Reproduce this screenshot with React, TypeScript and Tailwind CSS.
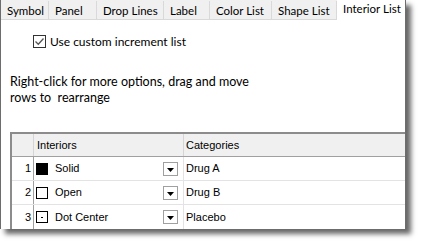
import type { ReactNode } from "react";

const TABS: { label: string; w: string; active?: boolean }[] = [
  { label: "Symbol", w: "w-[48px]" },
  { label: "Panel", w: "w-[48px]" },
  { label: "Drop Lines", w: "w-[67px]" },
  { label: "Label", w: "w-[46px]" },
  { label: "Color List", w: "w-[62px]" },
  { label: "Shape List", w: "w-[65px]" },
  { label: "Interior List", w: "flex-1", active: true },
];

type Kind = "solid" | "open" | "dot";

const ROWS: { n: number; kind: Kind; label: string; cat: string }[] = [
  { n: 1, kind: "solid", label: "Solid", cat: "Drug A" },
  { n: 2, kind: "open", label: "Open", cat: "Drug B" },
  { n: 3, kind: "dot", label: "Dot Center", cat: "Placebo" },
];

const ui = "font-['Lato','Noto_Sans',sans-serif]";
const grid = "font-['Liberation_Sans',Arial,sans-serif] text-[11px]";

function Swatch({ kind }: { kind: Kind }) {
  if (kind === "solid") return <span className="block w-[12px] h-[12px] bg-black" />;
  return (
    <span className="flex items-center justify-center w-[12px] h-[12px] border border-black bg-white">
      {kind === "dot" && <span className="block w-[2px] h-[1px] mt-[1px] bg-black" />}
    </span>
  );
}

function DropButton() {
  return (
    <span className="flex items-center justify-center w-[15px] h-[14px] border border-[#a0a0a0] bg-white">
      <svg width="7" height="4" viewBox="0 0 7 4" className="mt-[2px]">
        <path d="M0 0h7L3.5 4z" fill="#000" />
      </svg>
    </span>
  );
}

function Cell({ children, className = "" }: { children?: ReactNode; className?: string }) {
  return <div className={`flex items-center ${className}`}>{children}</div>;
}

export default function App() {
  return (
    <div className="w-[421px] h-[244px] bg-white">
      <div className="flex flex-col w-[406px] h-[229px] bg-white border-l border-r border-[#6d6d6d] shadow-[5px_5px_5px_rgba(0,0,0,0.6)] text-black">
        {/* tab strip */}
        <div className={`flex items-end h-[20px] bg-[#f0f0f0] text-[11.5px] ${ui}`}>
          {TABS.map((t) =>
            t.active ? (
              <div key={t.label} className={`${t.w} h-[20px] bg-white pl-[6px] pt-[2px] leading-[14px] whitespace-nowrap`}>
                {t.label}
              </div>
            ) : (
              <div
                key={t.label}
                className={`${t.w} h-[19px] pl-[6px] pt-[3px] leading-[14px] border-r border-b border-[#d9d9d9] whitespace-nowrap`}
              >
                {t.label}
              </div>
            ),
          )}
        </div>

        {/* checkbox */}
        <label className={`flex items-center gap-[4px] mt-[15px] pl-[32px] h-[13px] text-[12px] ${ui}`}>
          <span className="flex items-center justify-center w-[13px] h-[13px] border border-[#333] bg-white">
            <svg width="11" height="11" viewBox="0 0 11 11">
              <path d="M1.5 5.5l2.8 2.8L9.5 2.5" fill="none" stroke="#555" strokeWidth="1.3" />
            </svg>
          </span>
          <span className="leading-[13px]">Use custom increment list</span>
        </label>

        {/* hint */}
        <p className={`mt-[26px] pl-[9px] leading-[16px] text-[12.5px] ${ui}`}>
          Right-click for more options, drag and move
          <br />
          rows to&nbsp; rearrange
        </p>

        {/* grid */}
        <div className={`mt-auto ml-[9px] border-t-2 border-l-2 border-[#8c8c8c] ${grid}`}>
          <div className="flex h-[23px] bg-[#f0f0f0] border-b border-[#a0a0a0]">
            <Cell className="w-[22px] border-r border-[#d5d5d5]" />
            <Cell className="w-[150px] pl-[3px] border-r border-[#d5d5d5]">Interiors</Cell>
            <Cell className="flex-1 pl-[2px]">Categories</Cell>
          </div>
          {ROWS.map((r, i) => (
            <div
              key={r.n}
              className={`flex h-[24px] ${i < ROWS.length - 1 ? "border-b border-[#e3e3e3]" : ""}`}
            >
              <Cell className="w-[22px] justify-end pr-[2px] border-r border-[#a0a0a0]">{r.n}</Cell>
              <Cell className="w-[150px] pl-[2px] pr-[5px] border-r border-[#e3e3e3]">
                <Swatch kind={r.kind} />
                <span className="ml-[7px] flex-1">{r.label}</span>
                <DropButton />
              </Cell>
              <Cell className="flex-1 pl-[2px]">{r.cat}</Cell>
            </div>
          ))}
        </div>
      </div>
    </div>
  );
}
